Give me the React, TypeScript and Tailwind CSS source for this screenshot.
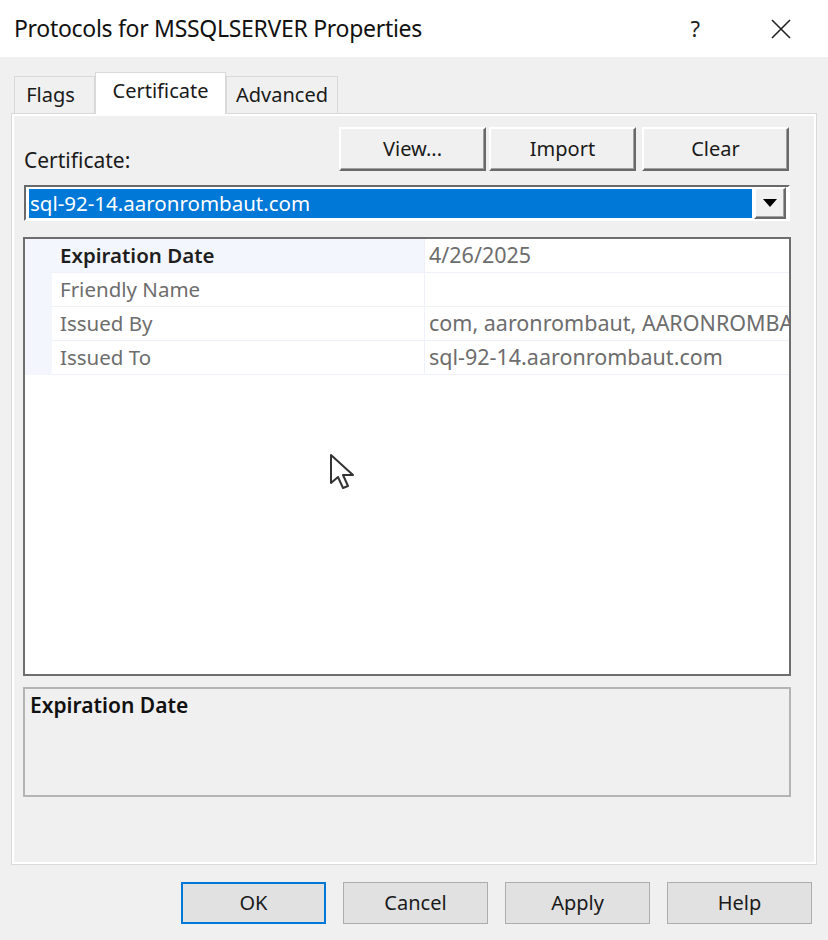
import React from 'react';

const rows = [
  { name: 'Expiration Date', value: '4/26/2025', selected: true },
  { name: 'Friendly Name', value: '' },
  { name: 'Issued By', value: 'com, aaronrombaut, AARONROMBAUT-CA' },
  { name: 'Issued To', value: 'sql-92-14.aaronrombaut.com' },
];

function RaisedButton({ children, className = '' }: { children: React.ReactNode; className?: string }) {
  return (
    <div
      className={`flex items-center justify-center bg-[#f0f0f0] border-2 border-t-white border-l-white border-r-[#696969] border-b-[#696969] shadow-[inset_-1px_-1px_0_#a0a0a0] text-[20px] text-[#1a1a1a] ${className}`}
    >
      {children}
    </div>
  );
}

function DialogButton({ label, focused = false }: { label: string; focused?: boolean }) {
  return (
    <div
      className={`w-[145px] h-[42px] flex items-center justify-center bg-[#e1e1e1] text-[20px] text-[#1a1a1a] ${
        focused ? 'border-2 border-[#0078d7]' : 'border border-[#adadad]'
      }`}
    >
      {label}
    </div>
  );
}

export default function App() {
  return (
    <div
      className="relative w-[828px] h-[940px] bg-[#f0f0f0] flex flex-col overflow-hidden"
      style={{ fontFamily: '"Noto Sans", "Open Sans", sans-serif' }}
    >
      {/* Title bar */}
      <div className="h-[57px] bg-white flex items-center pl-[14px] shrink-0">
        <span className="text-[23px] text-[#111] tracking-[-0.3px]">Protocols for MSSQLSERVER Properties</span>
        <span className="ml-auto text-[22px] text-[#222] mr-[70px]">?</span>
        <svg width="22" height="22" viewBox="0 0 22 22" className="mr-[36px]">
          <path d="M2 2 L20 20 M20 2 L2 20" stroke="#222" strokeWidth="1.6" />
        </svg>
      </div>

      {/* Tabs */}
      <div className="h-[56px] flex items-end pl-[14px] shrink-0">
        <div className="h-[37px] w-[81px] border border-b-0 border-[#d9d9d9] bg-[#f0f0f0] flex items-center justify-center text-[20px] text-[#1a1a1a] pr-[8px]">
          Flags
        </div>
        <div className="h-[42px] w-[131px] border border-b-0 border-[#d9d9d9] bg-white flex items-center justify-center text-[20px] text-[#1a1a1a] pb-[6px] relative top-[1px]">
          Certificate
        </div>
        <div className="h-[37px] w-[112px] border border-b-0 border-[#d9d9d9] bg-[#f0f0f0] flex items-center justify-center text-[20px] text-[#1a1a1a]">
          Advanced
        </div>
      </div>

      {/* Tab panel */}
      <div className="mx-[11px] h-[752px] border border-[#d9d9d9] shrink-0">
        <div className="h-full border-2 border-white flex flex-col px-[9px] pt-[11px]">
          {/* Label + buttons */}
          <div className="flex items-end h-[44px]">
            <span className="text-[21px] text-[#1a1a1a] leading-none ml-[1px]">Certificate:</span>
            <div className="ml-auto flex gap-[3px] mr-[16px]">
              <RaisedButton className="w-[147px] h-[44px]">View...</RaisedButton>
              <RaisedButton className="w-[147px] h-[44px]">Import</RaisedButton>
              <RaisedButton className="w-[147px] h-[44px] ml-[3px]">Clear</RaisedButton>
            </div>
          </div>

          {/* Combo box */}
          <div className="mt-[14px] h-[36px] mr-[15px] ml-[1px] bg-white border-2 border-t-[#696969] border-l-[#696969] border-r-white border-b-white flex items-center pl-[3px] pr-[2px] gap-[2px]">
            <div className="flex-1 h-[29px] bg-[#0078d7] text-white text-[20.5px] flex items-center pl-[1px] leading-none">
              sql-92-14.aaronrombaut.com
            </div>
            <RaisedButton className="w-[32px] h-[32px]">
              <svg width="14" height="8" viewBox="0 0 14 8">
                <path d="M0 0 L14 0 L7 8 Z" fill="#000" />
              </svg>
            </RaisedButton>
          </div>

          {/* Property grid */}
          <div className="mt-[16px] h-[439px] mr-[14px] border-2 border-[#6e6e6e] bg-white overflow-hidden">
            <div className="flex flex-col">
              {rows.map((r) => (
                <div key={r.name} className="flex h-[34px]">
                  <div className="w-[27px] bg-[#f3f6fc] shrink-0" />
                  <div
                    className={`w-[372px] shrink-0 flex items-center pl-[8px] text-[20.5px] border-b border-[#eef2f8] ${
                      r.selected ? 'bg-[#f3f6fc] font-semibold text-[#1e1e1e]' : 'text-[#6d6d6d]'
                    }`}
                  >
                    {r.name}
                  </div>
                  <div className="flex-1 flex items-center pl-[4px] text-[21.5px] text-[#6d6d6d] whitespace-nowrap overflow-hidden border-b border-l border-[#eef2f8]">
                    {r.value}
                  </div>
                </div>
              ))}
            </div>
          </div>

          {/* Description */}
          <div className="mt-[11px] h-[110px] mr-[14px] border-2 border-[#b4b4b4] bg-[#f0f0f0] pl-[5px] pt-[1px]">
            <span className="text-[21px] font-semibold text-[#111]">Expiration Date</span>
          </div>
        </div>
      </div>

      {/* Bottom buttons */}
      <div className="flex justify-end gap-[17px] pr-[16px] mt-[17px]">
        <DialogButton label="OK" focused />
        <DialogButton label="Cancel" />
        <DialogButton label="Apply" />
        <DialogButton label="Help" />
      </div>

      {/* Mouse cursor */}
      <svg className="absolute left-[329px] top-[453px]" width="28" height="40" viewBox="0 0 28 40">
        <path
          d="M2 2 L2 30 L9 24 L14 35 L19 33 L14 22 L24 22 Z"
          fill="white"
          stroke="#333"
          strokeWidth="2"
          strokeLinejoin="round"
        />
      </svg>
    </div>
  );
}
